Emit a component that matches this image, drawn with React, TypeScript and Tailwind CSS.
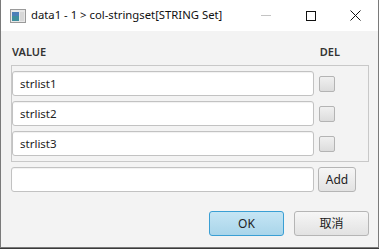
import React from "react";

const font = { fontFamily: '"Noto Sans", "Noto Sans CJK JP", sans-serif' };

const rows = ["strlist1", "strlist2", "strlist3"];

const Field = ({ value, className = "" }: { value: string; className?: string }) => (
  <div
    className={`h-[25px] rounded-[3px] border border-[#c2c2c2] bg-white px-[7px] flex items-center text-[11.5px] text-[#222] shadow-[inset_0_1px_1px_rgba(0,0,0,0.06)] ${className}`}
  >
    {value}
  </div>
);

const CheckBox = () => (
  <div className="w-[16px] h-[16px] rounded-[2px] border border-[#b4b4b4] bg-gradient-to-b from-[#f0f0f0] to-[#dcdcdc]" />
);

export default function App() {
  return (
    <div className="w-[379px] h-[249px] bg-[#3a3a3a] overflow-hidden" style={font}>
      <div className="h-[248px] border-x border-b border-[#7a7a7a] bg-[#f3f3f3] flex flex-col">
        {/* title bar */}
        <div className="h-[31px] bg-white flex items-center shrink-0">
          <svg width="16" height="14" viewBox="0 0 16 14" className="ml-[9px] mr-[5px]">
            <rect x="0.5" y="0.5" width="15" height="13" fill="#e8e8e8" stroke="#9a9a9a" />
            <rect x="2" y="3" width="7" height="9" fill="#3f8f9e" />
            <rect x="2" y="3" width="7" height="4" fill="#4c7fb8" />
            <rect x="10" y="3" width="4" height="9" fill="#d8d8d8" />
          </svg>
          <span className="text-[11.3px] text-[#111]">data1 - 1 &gt; col-stringset[STRING Set]</span>
          <div className="ml-auto flex h-full items-center">
            <div className="w-[46px] flex justify-center">
              <div className="w-[10px] h-[1px] bg-[#c4c4c4]" />
            </div>
            <div className="w-[43px] flex justify-center">
              <div className="w-[10px] h-[10px] border border-[#111]" />
            </div>
            <div className="w-[46px] flex justify-center">
              <svg width="11" height="11" viewBox="0 0 11 11">
                <path d="M0.5 0.5 L10.5 10.5 M10.5 0.5 L0.5 10.5" stroke="#111" strokeWidth="1" />
              </svg>
            </div>
          </div>
        </div>

        {/* body */}
        <div className="flex flex-col px-[10px]">
          <div className="flex items-end h-[34px] pb-[5px] text-[11px] font-semibold text-[#333]">
            <span className="ml-[1px]">VALUE</span>
            <span className="ml-auto mr-[28px]">DEL</span>
          </div>
          <div className="border border-[#c8c8c8] h-[97px] pt-[5px] mr-[-1px] flex flex-col gap-[5px]">
            {rows.map((r) => (
              <div key={r} className="flex items-center">
                <Field value={r} className="w-[302px]" />
                <div className="ml-[5px]">
                  <CheckBox />
                </div>
              </div>
            ))}
          </div>
          <div className="flex items-center mt-[5px]">
            <Field value="" className="w-[303px]" />
            <div className="ml-[4px] h-[25px] w-[38px] rounded-[3px] border border-[#b5b5b5] bg-gradient-to-b from-[#f6f6f6] to-[#e2e2e2] flex items-center justify-center text-[12px] text-[#222]">
              Add
            </div>
          </div>
          <div className="flex justify-end gap-[10px] mt-[19px] mr-[-1px]">
            <div className="h-[25px] w-[75px] rounded-[3px] border border-[#3a9fd4] bg-gradient-to-b from-[#c5e5f4] to-[#a9d5ea] flex items-center justify-center text-[12px] text-[#222]">
              OK
            </div>
            <div className="h-[25px] w-[75px] rounded-[3px] border border-[#b5b5b5] bg-gradient-to-b from-[#f6f6f6] to-[#e2e2e2] flex items-center justify-center text-[12px] text-[#222]">
              取消
            </div>
          </div>
        </div>
      </div>
    </div>
  );
}
